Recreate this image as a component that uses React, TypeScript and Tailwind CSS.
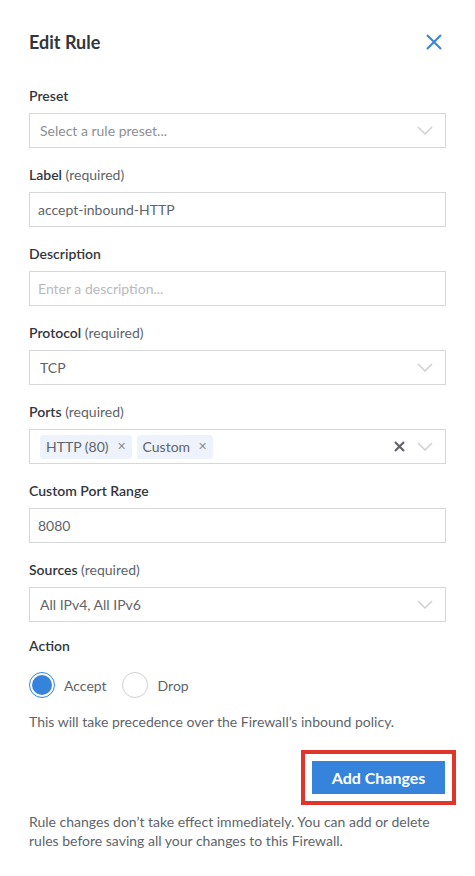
import React from "react";

const Chevron = () => (
  <svg width="16" height="9" viewBox="0 0 16 9" fill="none" className="shrink-0">
    <path d="M1 1l7 7 7-7" stroke="#cfd0d2" strokeWidth="1.5" />
  </svg>
);

const Label: React.FC<{ text: string; required?: boolean }> = ({ text, required }) => (
  <div className="mb-[8px] h-[18px] text-[14px] leading-[18px] font-semibold text-[#32363c]">
    {text}
    {required && <span className="font-normal text-[#606469]"> (required)</span>}
  </div>
);

const SelectBox: React.FC<{ value: string; placeholder?: boolean }> = ({ value, placeholder }) => (
  <div className="flex h-[35px] items-center justify-between border border-[#d6d7d9] pl-[10px] pr-[12px]">
    <span className={placeholder ? "text-[14px] text-[#8d8f92]" : "text-[14px] text-[#606469]"}>{value}</span>
    <Chevron />
  </div>
);

const InputBox: React.FC<{ value: string; placeholder?: boolean }> = ({ value, placeholder }) => (
  <div className="flex h-[35px] items-center border border-[#d6d7d9] px-[8px]">
    <span className={placeholder ? "text-[14px] text-[#b8babc]" : "text-[14px] text-[#606469]"}>{value}</span>
  </div>
);

const Chip: React.FC<{ text: string }> = ({ text }) => (
  <div className="flex h-[24px] items-center gap-[8px] rounded-[3px] bg-[#eef3fb] pl-[6px] pr-[6px] text-[14px] text-[#606469]">
    <span>{text}</span>
    <span className="text-[11px] text-[#8d8f92]">✕</span>
  </div>
);

const App: React.FC = () => {
  return (
    <div className="min-h-screen bg-white px-[29px] pt-[30px] font-['Lato','Liberation_Sans',sans-serif]">
      {/* 헤더 */}
      <div className="flex h-[24px] items-center justify-between">
        <h2 className="text-[18px] font-bold text-[#32363c]">Edit Rule</h2>
        <svg width="16" height="16" viewBox="0 0 16 16" className="mr-[4px]">
          <path d="M1 1l14 14M15 1L1 15" stroke="#3683dc" strokeWidth="2" />
        </svg>
      </div>

      <div className="mt-[33px] flex flex-col gap-[18px]">
        <div>
          <Label text="Preset" />
          <SelectBox value="Select a rule preset..." placeholder />
        </div>
        <div>
          <Label text="Label" required />
          <InputBox value="accept-inbound-HTTP" />
        </div>
        <div>
          <Label text="Description" />
          <InputBox value="Enter a description..." placeholder />
        </div>
        <div>
          <Label text="Protocol" required />
          <SelectBox value="TCP" />
        </div>
        <div>
          <Label text="Ports" required />
          <div className="flex h-[35px] items-center justify-between border border-[#d6d7d9] pl-[10px] pr-[12px]">
            <div className="flex gap-[5px]">
              <Chip text="HTTP (80)" />
              <Chip text="Custom" />
            </div>
            <div className="flex items-center gap-[12px]">
              <svg width="11" height="11" viewBox="0 0 11 11">
                <path d="M1 1l9 9M10 1l-9 9" stroke="#606469" strokeWidth="2.2" />
              </svg>
              <Chevron />
            </div>
          </div>
        </div>
        <div>
          <Label text="Custom Port Range" />
          <InputBox value="8080" />
        </div>
        <div>
          <Label text="Sources" required />
          <SelectBox value="All IPv4, All IPv6" />
        </div>
      </div>

      <div className="mt-[15px]">
        <Label text="Action" />
        <div className="mt-[17px] flex items-center text-[14px] text-[#606469]">
          <span className="flex h-[26px] w-[26px] items-center justify-center rounded-full border border-[#3683dc]">
            <span className="h-[20px] w-[20px] rounded-full bg-[#3683dc]" />
          </span>
          <span className="ml-[9px]">Accept</span>
          <span className="ml-[15px] h-[26px] w-[26px] rounded-full border border-[#cfd0d2]" />
          <span className="ml-[10px]">Drop</span>
        </div>
        <p className="mt-[14px] text-[14px] leading-[20px] text-[#606469]">
          This will take precedence over the Firewall’s inbound policy.
        </p>
      </div>

      {/* 버튼 */}
      <div className="mt-[29px] flex justify-end pr-px">
        <div className="relative">
          <button className="h-[33px] w-[133px] bg-[#3683dc] text-[16px] font-bold text-white">
            Add Changes
          </button>
          <span className="pointer-events-none absolute -inset-[11px] border-[4px] border-[#e0352a]" />
        </div>
      </div>

      <p className="mt-[18px] text-[14px] leading-[19px] text-[#606469]">
        Rule changes don’t take effect immediately. You can add or delete rules before saving all your
        changes to this Firewall.
      </p>
    </div>
  );
};

export default App;
